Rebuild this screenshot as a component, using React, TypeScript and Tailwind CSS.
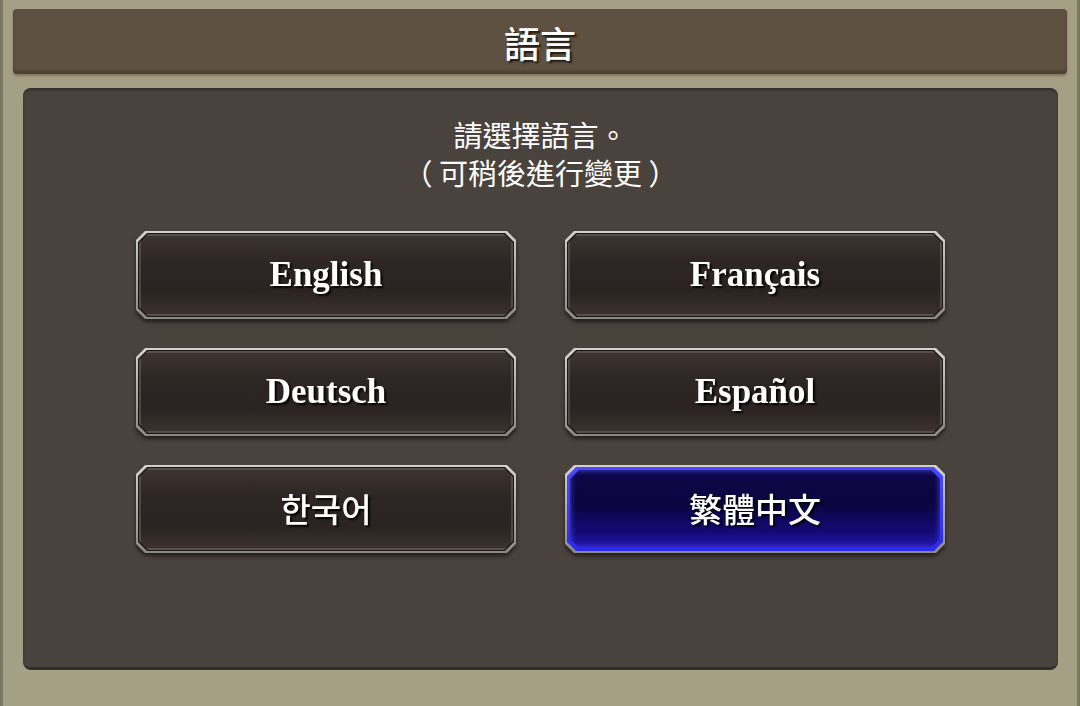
const chamfer =
  "[clip-path:polygon(9px_0,calc(100%_-_9px)_0,100%_9px,100%_calc(100%_-_9px),calc(100%_-_9px)_100%,9px_100%,0_calc(100%_-_9px),0_9px)]";

const languages = [
  { label: "English", latin: true },
  { label: "Français", latin: true },
  { label: "Deutsch", latin: true },
  { label: "Español", latin: true },
  { label: "한국어", latin: false },
  { label: "繁體中文", latin: false, active: true },
];

function LangButton({ label, latin, active }: { label: string; latin: boolean; active?: boolean }) {
  const font = latin
    ? "font-['Liberation_Serif',serif] font-bold text-[35px]"
    : "font-['Noto_Sans_CJK_KR','Noto_Sans_CJK_TC',sans-serif] font-medium text-[33px]";
  return (
    <div className="h-[88px] [filter:drop-shadow(0_3px_2px_rgba(0,0,0,0.55))]">
      <div className={`h-full p-[2px] bg-gradient-to-b from-[#d4d0cc] to-[#8c8884] ${chamfer}`}>
        {active ? (
          <div className={`h-full p-[3px] bg-gradient-to-b from-[#4a4aff] to-[#2a2aee] ${chamfer}`}>
            <div
              className={`h-full flex items-center justify-center bg-[linear-gradient(to_bottom,#0d0748,#0b0540_45%,#140a78_80%,#2416b0)] shadow-[inset_0_0_6px_rgba(80,80,255,0.9)] ${chamfer}`}
            >
              <span className={`${font} text-white [text-shadow:2px_2px_2px_rgba(0,0,0,0.85)]`}>{label}</span>
            </div>
          </div>
        ) : (
          <div className={`h-full p-[1px] bg-[#1c1614] ${chamfer}`}>
            <div
              className={`h-full flex items-center justify-center bg-[linear-gradient(to_bottom,#3e3432,#2e2624_35%,#2b2321_70%,#3c3331)] shadow-[inset_0_0_0_2px_rgba(140,128,124,0.35)] ${chamfer}`}
            >
              <span className={`${font} text-white [text-shadow:2px_2px_2px_rgba(0,0,0,0.9)]`}>{label}</span>
            </div>
          </div>
        )}
      </div>
    </div>
  );
}

export default function App() {
  return (
    <div className="w-[1080px] h-[706px] bg-[#a59f86] border-x-[3px] border-[#7a765f] pt-[9px] overflow-hidden font-['Noto_Sans_CJK_TC',sans-serif]">
      <div className="ml-[10px] mr-[10px] h-[65px] rounded-[4px] bg-[#5f5141] shadow-[inset_0_-3px_3px_rgba(40,30,20,0.35),0_2px_2px_rgba(60,50,30,0.35)] flex items-center justify-center">
        <h1 className="text-[36px] font-medium text-white leading-none [text-shadow:2px_2px_2px_rgba(0,0,0,0.7)]">
          語言
        </h1>
      </div>

      <div className="mt-[14px] ml-[20px] mr-[19px] h-[582px] rounded-[8px] bg-[#4a423d] border-b-[3px] border-[#362d27] shadow-[inset_0_2px_2px_rgba(30,24,20,0.5)]">
        <div className="pt-[27px] text-center text-white text-[29px] leading-[38px]">
          <p>請選擇語言。</p>
          <p>（ 可稍後進行變更 ）</p>
        </div>

        <div className="mt-[40px] mx-auto w-[809px] grid grid-cols-2 gap-x-[49px] gap-y-[29px]">
          {languages.map((l) => (
            <LangButton key={l.label} {...l} />
          ))}
        </div>
      </div>
    </div>
  );
}
